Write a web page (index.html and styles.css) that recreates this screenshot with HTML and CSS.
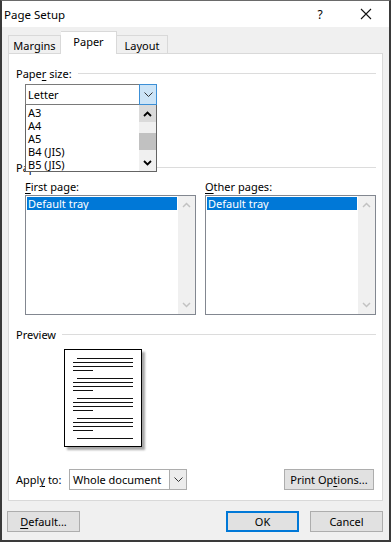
FILE: index.html
```html
<!DOCTYPE html>
<html lang="en">
<head>
  <meta charset="UTF-8" />
  <title>Page Setup</title>
  <link rel="stylesheet" href="styles.css">
</head>
<body>
  <div class="dialog">
    <div class="titlebar">
      <span class="title">Page Setup</span>
      <span class="caption-btn">?</span>
      <span class="caption-btn">
        <svg width="12" height="12" viewBox="0 0 12 12"><path d="M1 1L11 11M11 1L1 11" stroke="#111" stroke-width="1.1" fill="none"/></svg>
      </span>
    </div>

    <div class="body">
      <div class="tabs">
        <div class="tab tab-margins">Margins</div>
        <div class="tab tab-paper active">Paper</div>
        <div class="tab tab-layout">Layout</div>
      </div>

      <div class="panel">
        <div class="group-head"><span>Pape<u>r</u> size:</span></div>
        <div class="combo paper-combo">
          <div class="combo-field">
            <span class="combo-text">Letter</span>
            <span class="combo-btn open">
              <svg width="9" height="5" viewBox="0 0 9 5"><path d="M0.5 0.5L4.5 4.5L8.5 0.5" stroke="#333" fill="none"/></svg>
            </span>
          </div>
          <div class="droplist">
            <div class="drop-items">
              <div class="drop-item">A3</div>
              <div class="drop-item">A4</div>
              <div class="drop-item">A5</div>
              <div class="drop-item">B4 (JIS)</div>
              <div class="drop-item">B5 (JIS)</div>
            </div>
            <div class="drop-scroll">
              <span class="sb-btn sb-up">
                <svg width="9" height="6" viewBox="0 0 9 6"><path d="M1 5L4.5 1.5L8 5" stroke="#000" stroke-width="1.8" fill="none"/></svg>
              </span>
              <span class="sb-track"><span class="sb-thumb"></span></span>
              <span class="sb-btn">
                <svg width="9" height="6" viewBox="0 0 9 6"><path d="M1 1L4.5 4.5L8 1" stroke="#000" stroke-width="1.8" fill="none"/></svg>
              </span>
            </div>
          </div>
        </div>

        <div class="group-head source-head"><span>Paper source</span></div>
        <div class="trays">
          <div class="tray">
            <div class="tray-label"><u>F</u>irst page:</div>
            <div class="listbox">
              <div class="list-items"><div class="list-item selected">Default tray</div></div>
              <div class="list-scroll">
                <svg width="9" height="6" viewBox="0 0 9 6"><path d="M1 5L4.5 1.5L8 5" stroke="#c2c2c2" stroke-width="1.5" fill="none"/></svg>
                <svg width="9" height="6" viewBox="0 0 9 6"><path d="M1 1L4.5 4.5L8 1" stroke="#c2c2c2" stroke-width="1.5" fill="none"/></svg>
              </div>
            </div>
          </div>
          <div class="tray">
            <div class="tray-label"><u>O</u>ther pages:</div>
            <div class="listbox">
              <div class="list-items"><div class="list-item selected">Default tray</div></div>
              <div class="list-scroll">
                <svg width="9" height="6" viewBox="0 0 9 6"><path d="M1 5L4.5 1.5L8 5" stroke="#c2c2c2" stroke-width="1.5" fill="none"/></svg>
                <svg width="9" height="6" viewBox="0 0 9 6"><path d="M1 1L4.5 4.5L8 1" stroke="#c2c2c2" stroke-width="1.5" fill="none"/></svg>
              </div>
            </div>
          </div>
        </div>

        <div class="group-head preview-head"><span>Preview</span></div>
        <div class="page">
          <div class="para">
            <div class="ln ln-first"></div><div class="ln"></div><div class="ln"></div><div class="ln ln-short"></div>
          </div>
          <div class="para">
            <div class="ln ln-first"></div><div class="ln"></div><div class="ln"></div><div class="ln ln-short"></div>
          </div>
          <div class="para">
            <div class="ln ln-first"></div><div class="ln"></div><div class="ln"></div><div class="ln ln-short"></div>
          </div>
          <div class="para">
            <div class="ln ln-first"></div><div class="ln"></div><div class="ln"></div><div class="ln ln-short"></div>
          </div>
          <div class="para">
            <div class="ln ln-first"></div>
          </div>
        </div>

        <div class="apply-row">
          <span class="apply-label">Appl<u>y</u> to:</span>
          <div class="combo-field apply-combo">
            <span class="combo-text">Whole document</span>
            <span class="combo-btn">
              <svg width="9" height="5" viewBox="0 0 9 5"><path d="M0.5 0.5L4.5 4.5L8.5 0.5" stroke="#333" fill="none"/></svg>
            </span>
          </div>
          <button class="btn print-btn">Print Op<u>t</u>ions...</button>
        </div>
      </div>

      <div class="footer">
        <button class="btn"><u>D</u>efault...</button>
        <span class="spacer"></span>
        <button class="btn default-btn">OK</button>
        <button class="btn">Cancel</button>
      </div>
    </div>
  </div>
</body>
</html>
```

FILE: styles.css
```css
body {
  margin: 0;
  font-family: 'Noto Sans', 'Segoe UI', sans-serif;
  font-size: 11px;
  color: #000;
  background: #fff;
}

u {
  text-decoration-thickness: 1px;
  text-underline-offset: 2px;
}

.dialog {
  width: 391px;
  height: 542px;
  box-sizing: border-box;
  border: 2px solid #3a3a3a;
  border-top: 1px solid #6a6a6a;
  background: #f0f0f0;
  display: flex;
  flex-direction: column;
}

.titlebar {
  height: 26px;
  background: #fff;
  display: flex;
  align-items: center;
}

.title {
  flex: 1;
  padding-left: 2px;
  font-size: 11.5px;
}

.caption-btn {
  width: 46px;
  height: 26px;
  display: flex;
  align-items: center;
  justify-content: center;
  font-size: 12px;
}

.body {
  padding: 0 6px 0 6px;
}

.tabs {
  height: 26px;
  display: flex;
  align-items: flex-end;
}

.tab {
  height: 18px;
  box-sizing: border-box;
  border: 1px solid #d9d9d9;
  border-bottom: none;
  display: flex;
  align-items: center;
  justify-content: center;
  padding-top: 2px;
}

.tab-margins { width: 53px; }
.tab-paper { width: 56px; }
.tab-layout { width: 51px; border-left: none; }

.tab.active {
  height: 23px;
  background: #fff;
  margin-bottom: -1px;
  border-left: none;
  position: relative;
  z-index: 1;
  padding-top: 0;
  padding-bottom: 3px;
}

.panel {
  position: relative;
  height: 448px;
  box-sizing: border-box;
  border: 1px solid #d9d9d9;
  background: #fff;
  padding: 12px 6px 9px 7px;
}

.group-head {
  display: flex;
  align-items: center;
  gap: 6px;
  height: 15px;
  line-height: 15px;
}

.group-head::after {
  content: '';
  flex: 1;
  border-top: 1px solid #dcdcdc;
}

.combo {
  position: relative;
  z-index: 2;
}

.paper-combo {
  margin: 3px 0 0 9px;
  width: 132px;
}

.combo-field {
  height: 21px;
  box-sizing: border-box;
  border: 1px solid #7a7a7a;
  background: #fff;
  display: flex;
  align-items: center;
}

.combo-text {
  flex: 1;
  padding-left: 2px;
  white-space: nowrap;
  overflow: hidden;
}

.combo-btn {
  width: 17px;
  height: 19px;
  box-sizing: border-box;
  display: flex;
  align-items: center;
  justify-content: center;
  border-left: 1px solid #adadad;
  background: #ececec;
}

.combo-btn.open {
  width: 18px;
  height: 21px;
  margin: -1px -1px -1px 0;
  border: 1px solid #3c8fd6;
  background: #cce4f7;
}

.droplist {
  position: absolute;
  left: 0;
  right: 0;
  top: 21px;
  height: 67px;
  box-sizing: border-box;
  border: 1px solid #646464;
  border-top: none;
  background: #fff;
  display: flex;
}

.drop-items {
  flex: 1;
  padding-top: 1px;
}

.drop-item {
  height: 13px;
  line-height: 13px;
  padding-left: 2px;
}

.drop-scroll {
  width: 17px;
  display: flex;
  flex-direction: column;
  background: #f0f0f0;
}

.sb-btn {
  height: 17px;
  display: flex;
  align-items: center;
  justify-content: center;
}

.sb-up {
  background: #dadada;
}

.sb-track {
  flex: 1;
  padding-top: 11px;
}

.sb-thumb {
  display: block;
  height: 17px;
  background: #c1c1c1;
}

.source-head {
  margin-top: 55px;
}

.trays {
  display: flex;
  gap: 9px;
  margin: 4px 0 0 9px;
}

.tray {
  flex: 1;
}

.tray-label {
  height: 15px;
  line-height: 15px;
  margin-bottom: 1px;
}

.listbox {
  height: 120px;
  box-sizing: border-box;
  border: 1px solid #828790;
  display: flex;
  background: #fff;
}

.list-items {
  flex: 1;
  padding: 1px;
}

.list-item {
  height: 13px;
  line-height: 13px;
  padding-left: 1px;
}

.list-item.selected {
  background: #0078d7;
  color: #fff;
}

.list-scroll {
  width: 17px;
  background: #f0f0f0;
  display: flex;
  flex-direction: column;
  align-items: center;
  justify-content: space-between;
  padding: 6px 0;
}

.preview-head {
  margin-top: 12px;
}

.page {
  width: 78px;
  height: 98px;
  box-sizing: border-box;
  border: 1px solid #000;
  background: #fff;
  margin: 7px 0 0 48px;
  padding: 8px 0 0 8px;
  box-shadow: 3px 3px 2px rgba(0, 0, 0, 0.35);
}

.para {
  margin-bottom: 7px;
}

.ln {
  width: 60px;
  height: 1px;
  background: #111;
  margin-bottom: 3px;
}

.ln-first {
  width: 56px;
  margin-left: 4px;
}

.ln-short {
  width: 20px;
}

.apply-row {
  display: flex;
  align-items: center;
  margin-top: 22px;
  height: 21px;
}

.apply-label {
  width: 53px;
}

.apply-combo {
  width: 118px;
  border-color: #adadad;
}

.apply-combo .combo-text {
  padding-left: 3px;
}

.btn {
  font: inherit;
  color: #000;
  height: 21px;
  box-sizing: border-box;
  border: 1px solid #adadad;
  background: #e1e1e1;
  padding: 0;
  display: flex;
  align-items: center;
  justify-content: center;
}

.print-btn {
  width: 90px;
  margin: 0 2px 0 auto;
}

.footer {
  display: flex;
  gap: 11px;
  margin-top: 10px;
}

.footer .btn {
  width: 73px;
}

.footer .btn:first-child {
  margin-left: -1px;
}

.spacer {
  flex: 1;
}

.default-btn {
  border: 2px solid #0078d7;
}
```
